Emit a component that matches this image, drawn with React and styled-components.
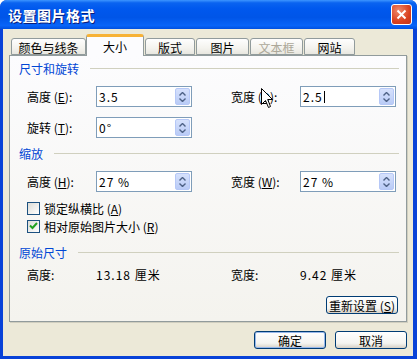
import React from "react";
import styled, { createGlobalStyle } from "styled-components";

const GlobalStyle = createGlobalStyle`
  html, body {
    margin: 0;
    padding: 0;
    background: #ffffff;
  }
  body {
    font-family: "Noto Sans CJK SC", "Liberation Sans", sans-serif;
    font-size: 12px;
    color: #000;
  }
`;

const Window = styled.div`
  position: relative;
  width: 417px;
  height: 359px;
  box-sizing: border-box;
  display: flex;
  flex-direction: column;
  border-radius: 7px 7px 0 0;
  overflow: hidden;
  background: #0842d8;
`;

const TitleBar = styled.div`
  height: 29px;
  flex: none;
  display: flex;
  align-items: center;
  justify-content: space-between;
  padding: 0 5px 0 8px;
  background: linear-gradient(
    #3d95ff 0%,
    #0a63f0 10%,
    #0058ee 30%,
    #0055e8 60%,
    #0864f8 88%,
    #0050e0 100%
  );
  color: #fff;
  font-weight: bold;
  font-size: 14px;
  letter-spacing: 0.5px;
  text-shadow: 1px 1px 0 #0a1e7a;
`;

const CloseButton = styled.div`
  width: 19px;
  height: 19px;
  border: 1px solid #fff;
  border-radius: 3px;
  background: radial-gradient(circle at 35% 30%, #f08a6c, #d9411f 60%, #c1331a);
  display: flex;
  align-items: center;
  justify-content: center;
`;

const Body = styled.div`
  flex: 1;
  margin: 0 4px 3px 3px;
  background: #ece9d8;
  padding: 5px 6px 0 6px;
  display: flex;
  flex-direction: column;
`;

const TabRow = styled.div`
  height: 21px;
  display: flex;
  align-items: flex-end;
  gap: 1px;
  padding-left: 2px;
  position: relative;
  z-index: 1;
`;

const Tab = styled.div`
  box-sizing: border-box;
  width: ${(p) => p.w}px;
  height: ${(p) => (p.active ? 22 : 17)}px;
  margin-bottom: ${(p) => (p.active ? -1 : 0)}px;
  margin-right: ${(p) => (p.tight ? -1 : 0)}px;
  border: 1px solid #919b9c;
  border-bottom: ${(p) => (p.active ? "none" : "1px solid #919b9c")};
  border-top: ${(p) => (p.active ? "3px solid #f7b236" : "1px solid #919b9c")};
  border-radius: 3px 3px 0 0;
  background: ${(p) =>
    p.active ? "#fcfcfe" : "linear-gradient(#fefefe, #f4f3ee 60%, #e8e7e0)"};
  color: ${(p) => (p.disabled ? "#aca899" : "#000")};
  display: flex;
  align-items: center;
  justify-content: center;
  padding-top: ${(p) => (p.active ? 0 : 1)}px;
  font-size: 12px;
`;

const Panel = styled.div`
  height: 267px;
  box-sizing: border-box;
  border: 1px solid #919b9c;
  box-shadow: 1px 1px 0 #d0cebf;
  background: linear-gradient(#fcfcfe, #f4f3ee);
  display: flex;
  flex-direction: column;
`;

const SectionHeader = styled.div`
  height: 14px;
  margin-top: ${(p) => p.top}px;
  padding: 0 7px 0 9px;
  display: flex;
  align-items: center;
  gap: 11px;
  color: #0046d5;
  &::after {
    content: "";
    flex: 1;
    height: 1px;
    background: #d0d0bf;
  }
`;

const FieldRow = styled.div`
  display: grid;
  grid-template-columns: 69px 96px 39px 69px 96px;
  align-items: center;
  height: ${(p) => p.h || 17}px;
  margin-top: ${(p) => p.top}px;
  padding-left: 17px;
`;

const Label = styled.span`
  white-space: nowrap;
  u {
    text-decoration: underline;
  }
`;

const InputBox = styled.div`
  box-sizing: border-box;
  width: 96px;
  height: 100%;
  border: 1px solid #7f9db9;
  background: #fff;
  display: flex;
  align-items: center;
  padding: 1px 1px 1px 2px;
`;

const InputText = styled.span`
  flex: 1;
  letter-spacing: 1px;
  display: flex;
  align-items: center;
`;

const Caret = styled.span`
  width: 1px;
  height: 12px;
  background: #000;
  margin-left: 1px;
`;

const SpinButton = styled.div`
  box-sizing: border-box;
  width: 15px;
  height: 100%;
  border: 1px solid #b6c8f7;
  border-radius: 2px;
  background: linear-gradient(#d6e1fc, #b9cbf6);
  display: flex;
  flex-direction: column;
  align-items: center;
  justify-content: center;
  gap: 2px;
`;

const CheckRow = styled.label`
  display: flex;
  align-items: center;
  gap: 4px;
  height: 14px;
  margin-top: ${(p) => p.top}px;
  padding-left: 17px;
`;

const CheckBox = styled.span`
  box-sizing: border-box;
  width: 13px;
  height: 13px;
  border: 1px solid #1c5180;
  background: linear-gradient(135deg, #dcdcd7, #fff);
  display: flex;
  align-items: center;
  justify-content: center;
`;

const ButtonRow = styled.div`
  display: flex;
  justify-content: flex-end;
  gap: 9px;
  margin-top: ${(p) => p.top}px;
  padding-right: ${(p) => p.right || 0}px;
`;

const Button = styled.div`
  box-sizing: border-box;
  width: 72px;
  height: 18px;
  border: 1px solid #003c74;
  border-radius: 3px;
  background: linear-gradient(#fff, #f4f4f0 70%, #d6d0c5);
  box-shadow: ${(p) => (p.primary ? "inset 0 0 0 1px #98b8ea" : "none")};
  display: flex;
  align-items: center;
  justify-content: center;
  white-space: nowrap;
`;

const Cursor = styled.svg`
  position: absolute;
  left: 261px;
  top: 88px;
  z-index: 5;
`;

const Arrow = ({ up }) => (
  <svg width="7" height="4" viewBox="0 0 7 4">
    <path
      d={up ? "M0.5 3.5 L3.5 0.5 L6.5 3.5" : "M0.5 0.5 L3.5 3.5 L6.5 0.5"}
      fill="none"
      stroke="#4d6185"
      strokeWidth="1.4"
    />
  </svg>
);

const Spin = () => (
  <SpinButton>
    <Arrow up />
    <Arrow />
  </SpinButton>
);

const Input = ({ value, caret }) => (
  <InputBox>
    <InputText>
      {value}
      {caret && <Caret />}
    </InputText>
    <Spin />
  </InputBox>
);

const tabs = [
  { name: "颜色与线条", w: 75, tight: true },
  { name: "大小", w: 58, active: true },
  { name: "版式", w: 50 },
  { name: "图片", w: 53 },
  { name: "文本框", w: 53, disabled: true },
  { name: "网站", w: 51 },
];

export default function App() {
  return (
    <>
      <GlobalStyle />
      <Window>
        <TitleBar>
          <span>设置图片格式</span>
          <CloseButton>
            <svg width="11" height="11" viewBox="0 0 11 11">
              <path d="M1.5 1.5 L9.5 9.5 M9.5 1.5 L1.5 9.5" stroke="#fff" strokeWidth="2" />
            </svg>
          </CloseButton>
        </TitleBar>
        <Body>
          <TabRow>
            {tabs.map((t) => (
              <Tab key={t.name} w={t.w} active={t.active} disabled={t.disabled} tight={t.tight}>
                {t.name}
              </Tab>
            ))}
          </TabRow>
          <Panel>
            <SectionHeader top={5}>尺寸和旋转</SectionHeader>
            <FieldRow top={11} h={18}>
              <Label>
                高度 (<u>E</u>):
              </Label>
              <Input value="3.5" />
              <span />
              <Label>
                宽度 (<u>D</u>):
              </Label>
              <Input value="2.5" caret />
            </FieldRow>
            <FieldRow top={13}>
              <Label>
                旋转 (<u>T</u>):
              </Label>
              <Input value="0°" />
            </FieldRow>
            <SectionHeader top={12}>缩放</SectionHeader>
            <FieldRow top={11}>
              <Label>
                高度 (<u>H</u>):
              </Label>
              <Input value="27 %" />
              <span />
              <Label>
                宽度 (<u>W</u>):
              </Label>
              <Input value="27 %" />
            </FieldRow>
            <CheckRow top={13}>
              <CheckBox />
              <span>
                锁定纵横比 (<u>A</u>)
              </span>
            </CheckRow>
            <CheckRow top={4}>
              <CheckBox>
                <svg width="9" height="8" viewBox="0 0 9 8">
                  <path d="M1 3.5 L3.5 6 L8 1" fill="none" stroke="#21a121" strokeWidth="2" />
                </svg>
              </CheckBox>
              <span>
                相对原始图片大小 (<u>R</u>)
              </span>
            </CheckRow>
            <SectionHeader top={12}>原始尺寸</SectionHeader>
            <FieldRow top={7} h={14}>
              <Label>高度:</Label>
              <InputText>13.18 厘米</InputText>
              <span />
              <Label>宽度:</Label>
              <InputText>9.42 厘米</InputText>
            </FieldRow>
            <ButtonRow top={16} right={8}>
              <Button>
                重新设置 (<u>S</u>)
              </Button>
            </ButtonRow>
          </Panel>
          <ButtonRow top={9}>
            <Button primary>确定</Button>
            <Button>取消</Button>
          </ButtonRow>
        </Body>
        <Cursor width="13" height="21" viewBox="0 0 13 21">
          <path
            d="M0.5 0.5 L0.5 16.5 L4.5 12.5 L7.5 19.5 L9.5 18.5 L6.7 11.5 L11.5 11.5 Z"
            fill="#fff"
            stroke="#000"
            strokeWidth="1"
          />
        </Cursor>
      </Window>
    </>
  );
}
